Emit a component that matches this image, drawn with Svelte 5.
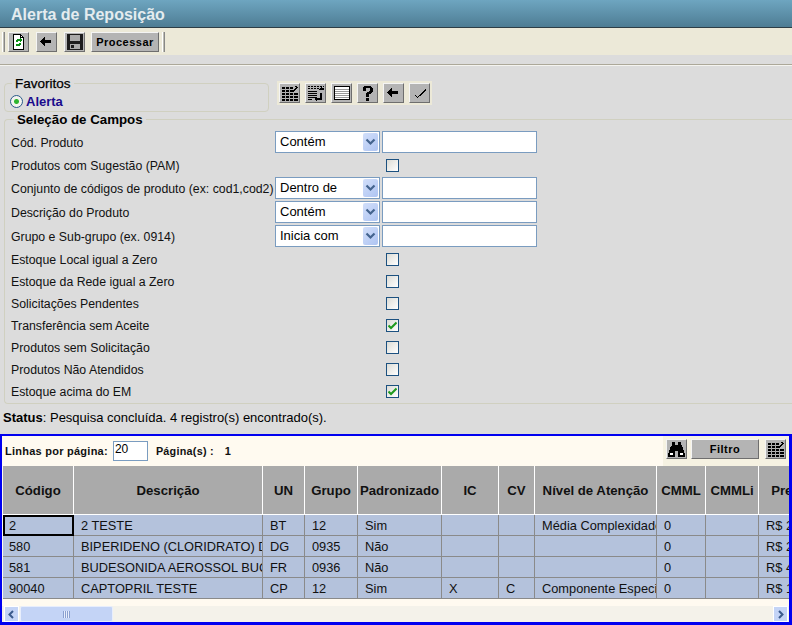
<script>
  const campos = [
    { label: 'Cód. Produto', op: 'Contém' },
    { label: 'Produtos com Sugestão (PAM)', check: false },
    { label: 'Conjunto de códigos de produto (ex: cod1,cod2)', op: 'Dentro de' },
    { label: 'Descrição do Produto', op: 'Contém' },
    { label: 'Grupo e Sub-grupo (ex. 0914)', op: 'Inicia com' },
    { label: 'Estoque Local igual a Zero', check: false },
    { label: 'Estoque da Rede igual a Zero', check: false },
    { label: 'Solicitações Pendentes', check: false },
    { label: 'Transferência sem Aceite', check: true },
    { label: 'Produtos sem Solicitação', check: false },
    { label: 'Produtos Não Atendidos', check: false },
    { label: 'Estoque acima do EM', check: true }
  ];
  const colunas = [
    ['Código', 71], ['Descrição', 189], ['UN', 42], ['Grupo', 53], ['Padronizado', 84], ['IC', 57],
    ['CV', 36], ['Nível de Atenção', 122], ['CMML', 49], ['CMMLi', 53], ['Preço', 62]
  ];
  const linhas = [
    ['2', '2 TESTE', 'BT', '12', 'Sim', '', '', 'Média Complexidade', '0', '', 'R$ 2,00'],
    ['580', 'BIPERIDENO (CLORIDRATO) DE', 'DG', '0935', 'Não', '', '', '', '0', '', 'R$ 2,00'],
    ['581', 'BUDESONIDA AEROSSOL BUCAL', 'FR', '0936', 'Não', '', '', '', '0', '', 'R$ 4,00'],
    ['90040', 'CAPTOPRIL TESTE', 'CP', '12', 'Sim', 'X', 'C', 'Componente Especializado', '0', '', 'R$ 1,00']
  ];
</script>

{#snippet btn(kind)}
  <button class="icon" aria-label={kind}>
    <svg width="19" height="18" viewBox="0 0 19 18" shape-rendering="crispEdges">
      {#if kind === 'refresh'}
        <path d="M4.5 1.5h7l3 3v12h-10z" fill="#fff" stroke="#000"/>
        <path d="M11.5 1.5v3h3" fill="none" stroke="#000"/>
        <path d="M7 9V7h1V6h3V5l2 2-2 2V8H9v1zM12 10v2h-1v1H8v1l-2-2 2-2v1h2v-1z" fill="#0a8f14"/>
      {:else if kind === 'back'}
        <path d="M3 8h1V7h1V6h1V5h1V4h1v3h6v3H8v3H7v-1H6v-1H5v-1H4V9H3z" fill="#000"/>
      {:else if kind === 'save'}
        <path d="M2 1h16v16H2z" fill="#1c1c1c"/>
        <path d="M5 2h10v6H5z" fill="#aaa"/>
        <path d="M5 11h10v5H5z" fill="#aaa"/>
        <path d="M6 12h3v3H6z" fill="#1c1c1c"/>
      {:else if kind === 'grid'}
        <path d="M2 3h11v2H2zM2 6h12v2H2zM2 9h16v2H2zM2 12h16v2H2zM2 15h16v2H2z" fill="#000"/>
        <path d="M5.5 3v14M9.5 3v14M13.5 9v8" stroke="#aaa" fill="none"/>
        <path d="M14 7h1V6h1V5h1V4h1V3h-1V2h-2v1h1v1h-1v1h-1v1h-1z" fill="#000"/>
      {:else if kind === 'sort'}
        <path d="M2 2.5h16M2 4.5h16" stroke="#000" stroke-dasharray="2 1" fill="none"/>
        <path d="M2 7.5h9M2 9.5h9M2 11.5h9M2 13.5h9M2 15.5h4" stroke="#000" fill="none"/>
        <path d="M14 9h2v7h-6v-2h4z" fill="#000"/>
        <path d="M12 6h6l-3-3zM11 12v6l-3-3z" fill="#000"/>
      {:else if kind === 'list'}
        <path d="M2.5 2.5h15v13h-15z" fill="#fff" stroke="#000"/>
        <path d="M3 5.5h14M3 7.5h14M3 9.5h14M3 11.5h14M3 13.5h14" stroke="#999" fill="none"/>
      {:else if kind === 'help'}
        <path d="M6 2h7v1h1v1h1v4h-1v1h-1v1h-2v3H8V9h1V8h2V7h1V4H8v3H5V3h1zM8 14h3v3H8z" fill="#000"/>
      {:else if kind === 'ok'}
        <path d="M4 11h2v1h1v1h1v-1h1v-1h1v-1h1V9h1V8h1V7h1V6h1V5h1v2h-1v1h-1v1h-1v1h-1v1h-1v1H9v1H8v1H7v-1H6v-1H5v-1H4z" fill="#000"/>
      {:else if kind === 'binoc'}
        <path d="M5 2h3v3h3V2h3v3l1 1 3 8v3h-7v-6H8v6H1v-3l3-8 1-1z" fill="#000"/>
        <path d="M3 13h3v2H3zM13 13h3v2h-3z" fill="#fff"/>
      {/if}
    </svg>
  </button>
{/snippet}

<div class="page">
  <header>Alerta de Reposição</header>

  <div class="toolbar">
    <span class="grip"></span>
    <div class="tb-group">
      {@render btn('refresh')}
      {@render btn('back')}
      {@render btn('save')}
      <button class="text">Processar</button>
    </div>
    <span class="grip"></span>
  </div>
  <div class="sep"></div>

  <div class="fav-row">
    <fieldset class="fav">
      <legend>Favoritos</legend>
      <label class="radio"><span class="dot"></span>Alerta</label>
    </fieldset>
    <div class="tools">
      {@render btn('grid')}
      {@render btn('sort')}
      {@render btn('list')}
      {@render btn('help')}
      {@render btn('back')}
      {@render btn('ok')}
    </div>
  </div>

  <fieldset class="campos">
    <legend>Seleção de Campos</legend>
    <div class="form">
      {#each campos as c}
        <div class="lbl" class:tall={c.op}>{c.label}</div>
        {#if c.op}
          <div class="sel">
            <span>{c.op}</span>
            <i>
              <svg width="11" height="8" viewBox="0 0 11 8"><path d="M1.5 1.5l4 4 4-4" fill="none" stroke="#44648f" stroke-width="2.2"/></svg>
            </i>
          </div>
          <div class="inp"></div>
        {:else}
          <div class="chk-cell">
            <span class="chk">
              {#if c.check}
                <svg width="9" height="9" viewBox="0 0 9 9"><path d="M0.5 4.5l2.5 2.5L8.5 1.5" fill="none" stroke="#1f9a1f" stroke-width="2"/></svg>
              {/if}
            </span>
          </div>
        {/if}
      {/each}
    </div>
  </fieldset>

  <div class="status"><b>Status</b>: Pesquisa concluída. 4 registro(s) encontrado(s).</div>

  <section class="result">
    <div class="pager">
      <span class="pl">Linhas por página:</span>
      <span class="num">20</span>
      <span class="pl pg">Página(s) :</span>
      <span class="pl one">1</span>
      <div class="pager-tools">
        {@render btn('binoc')}
        <button class="text filtro">Filtro</button>
        {@render btn('grid')}
      </div>
    </div>
    <div class="tbl-wrap">
      <table>
        <colgroup>
          {#each colunas as c}<col style="width:{c[1]}px" />{/each}
        </colgroup>
        <thead>
          <tr>{#each colunas as c}<th>{c[0]}</th>{/each}</tr>
        </thead>
        <tbody>
          {#each linhas as l, i}
            <tr>
              {#each l as v, j}
                <td class:focus={i === 0 && j === 0}><div>{v}</div></td>
              {/each}
            </tr>
          {/each}
        </tbody>
      </table>
    </div>
    <div class="scroll">
      <span class="sb">
        <svg width="9" height="9" viewBox="0 0 9 9"><path d="M6 1L2.5 4.5 6 8" fill="none" stroke="#3a5a8c" stroke-width="2"/></svg>
      </span>
      <span class="thumb"><em></em></span>
      <span class="track"></span>
      <span class="sb">
        <svg width="9" height="9" viewBox="0 0 9 9"><path d="M3 1l3.5 3.5L3 8" fill="none" stroke="#3a5a8c" stroke-width="2"/></svg>
      </span>
    </div>
  </section>
</div>

<style>
  :global(body) { margin: 0; background: #dcdcdc; }
  .page {
    width: 792px; height: 625px; overflow: hidden;
    background: #dcdcdc; color: #000;
    font-family: "Liberation Sans", Arial, sans-serif; font-size: 12px;
  }
  header {
    height: 28px; box-sizing: border-box; padding: 5px 0 0 11px;
    background: linear-gradient(#6ea5c0, #4e7d94);
    border-bottom: 1px solid #2e3e46;
    color: #e4ecef; font-size: 16px; font-weight: bold; line-height: 19px;
  }
  .toolbar {
    height: 27px; box-sizing: border-box; background: #ece9d8;
    display: flex; align-items: center; padding-left: 2px;
  }
  .grip { width: 3px; height: 20px; background: #bdbdb4; border-left: 1px solid #fff; border-right: 1px solid #888; box-sizing: border-box; }
  .tb-group { display: flex; gap: 7px; margin: 0 3px 0 3px; }
  .tb-group .text { margin-left: -1px; }
  .sep { height: 9px; border-bottom: 1px solid #aca899; box-shadow: 0 1px 0 #f4f4f0; }

  button {
    box-sizing: border-box; padding: 0; margin: 0;
    background: #b4b4b4;
    border: 1px solid; border-color: #f4f4f4 #6e6e6e #6e6e6e #f4f4f4;
    display: inline-flex; align-items: center; justify-content: center;
  }
  .icon { width: 21px; height: 20px; }
  .text {
    height: 20px; width: 68px;
    font: bold 11px "Liberation Sans", Arial, sans-serif; letter-spacing: 0.5px; color: #000;
  }

  .fav-row { display: flex; align-items: flex-start; padding: 11px 0 0 4px; height: 48px; box-sizing: border-box; }
  fieldset { margin: 0; min-width: 0; box-sizing: border-box; border: 1px solid #d0d0c0; border-radius: 4px; }
  legend { font-size: 13.3px; font-weight: bold; padding: 0 3px; line-height: 15px; }
  .fav { width: 265px; height: 36px; padding: 3px 0 0 5px; }
  .fav legend { font-size: 13.5px; font-weight: normal; margin-left: 2px; -webkit-text-stroke: 0.25px #000; }
  .radio { display: flex; align-items: center; gap: 3px; color: #1a0a8c; font-size: 13px; font-weight: bold; line-height: 15px; }
  .dot {
    width: 13px; height: 13px; box-sizing: border-box; border: 1px solid #2a5a8a; border-radius: 50%;
    background: radial-gradient(circle, #2fb52f 0 2px, #f4f4ee 3px);
  }
  .tools { display: flex; gap: 5px; margin: 5px 0 0 8px; padding: 2px; background: #ece9d8; }

  .campos { width: 800px; height: 292px; padding: 0 0 0 6px; margin: -1px 0 0 4px; border-right: 0; }
  .campos legend { margin-left: 3px; }
  .form { display: grid; grid-template-columns: 264px 105px auto; justify-content: start; margin-top: 4px; }
  .lbl { display: flex; align-items: center; height: 22px; white-space: nowrap; font-size: 12.3px; color: #111; }
  .lbl.tall { height: 24px; }
  .sel, .inp { box-sizing: border-box; height: 22px; background: #fff; border: 1px solid #7a9cc0; }
  .sel { display: flex; justify-content: space-between; align-items: stretch; padding: 0 0 0 4px; line-height: 20px; font-size: 13px; }
  .sel i {
    width: 15px; margin: 1px; background: linear-gradient(135deg, #d2dffa, #aec4f2); border-radius: 2px;
    display: flex; align-items: center; justify-content: center;
  }
  .inp { width: 155px; margin-left: 2px; }
  .chk-cell { grid-column: 2 / span 2; display: flex; align-items: center; padding: 0 0 2px 111px; height: 22px; box-sizing: border-box; }
  .chk {
    width: 13px; height: 13px; box-sizing: border-box; border: 1px solid #1c5180;
    background: linear-gradient(135deg, #dcdcd6, #fff);
    display: flex; align-items: center; justify-content: center;
  }

  .status { height: 30px; box-sizing: border-box; padding: 6px 0 0 3px; font-size: 13px; line-height: 16px; }

  .result {
    height: 191px; box-sizing: border-box; background: #fffaf0;
    border: solid #0000f0; border-width: 2px 3px 3px 2px; overflow: hidden;
  }
  .pager { height: 30px; box-sizing: border-box; display: flex; align-items: center; padding-left: 3px; }
  .pl { font-size: 11px; font-weight: bold; letter-spacing: 0.25px; color: #111; }
  .num {
    width: 35px; height: 20px; box-sizing: border-box; border: 1px solid #7a9cc0; background: #fff;
    margin-left: 5px; padding-left: 1px; line-height: 14px; font-size: 12px; margin-top: -1px;
  }
  .pg { margin-left: 8px; font-size: 10.8px; }
  .one { margin-left: 11px; }
  .pager-tools { margin-left: auto; align-self: stretch; display: flex; align-items: flex-start; gap: 4px; padding: 3px 3px 0 3px; background: #f6f2e2; }
  .filtro { margin-right: 2px; }

  .tbl-wrap { overflow: hidden; height: 133px; margin-left: 1px; }
  table { border-collapse: separate; border-spacing: 0; table-layout: fixed; width: 818px; }
  th {
    height: 49px; box-sizing: border-box; padding: 0; background: #aaa; color: #111; font-size: 13.2px; font-weight: bold;
    border-right: 1px solid #fff; border-bottom: 1px solid #fff;
  }
  td {
    height: 21px; padding: 0 0 0 6px; background: #b4c2dc; color: #111; font-size: 12.8px;
    border-right: 1px solid #8a8a8a; border-bottom: 1px solid #8a8a8a; box-sizing: border-box;
    overflow: hidden; white-space: nowrap;
  }
  td + td { padding-left: 7px; }
  td div { overflow: hidden; }
  td.focus { outline: 2px solid #000; outline-offset: -2px; }

  .scroll { height: 16px; margin-top: 7px; display: flex; align-items: stretch; background: #f4f2ea; padding: 0 1px 0 2px; }
  .sb {
    width: 15px; box-sizing: border-box; background: #c4d4f6; border: 1px solid #fff;
    display: flex; align-items: center; justify-content: center;
  }
  .thumb {
    width: 93px; margin-left: 1px; box-sizing: border-box; background: #c4d4f6; border: 1px solid #e8eefc;
    border-radius: 2px; display: flex; align-items: center; justify-content: center;
  }
  .thumb em { width: 7px; height: 7px; background: repeating-linear-gradient(90deg, #8aa0d0 0 1px, #e8eefc 1px 2px); }
  .track { flex: 1; }
</style>
